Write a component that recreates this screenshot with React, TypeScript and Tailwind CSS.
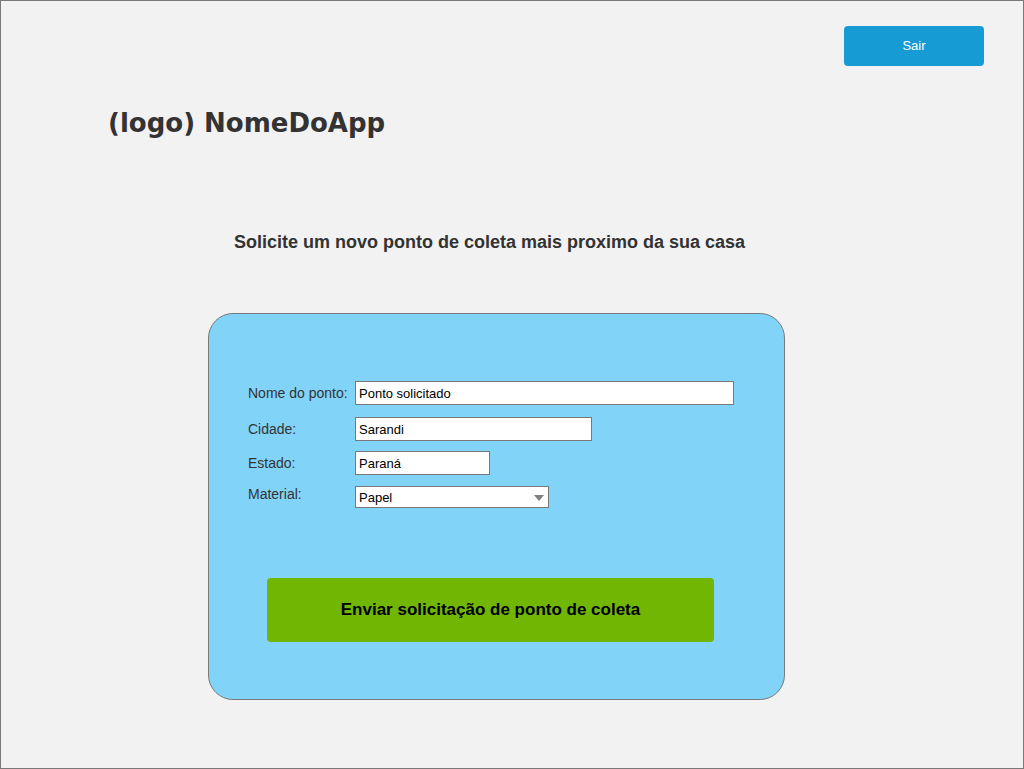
const fields = [
  { label: "Nome do ponto:", value: "Ponto solicitado", w: "w-[379px]", mt: "mt-0" },
  { label: "Cidade:", value: "Sarandi", w: "w-[237px]", mt: "mt-[12px]" },
  { label: "Estado:", value: "Paraná", w: "w-[135px]", mt: "mt-[10px]" },
];

export default function App() {
  return (
    <div className="w-[1024px] h-[769px] border border-[#797979] bg-[#f2f2f2] font-['Liberation_Sans',Arial,sans-serif] text-[#333333]">
      <div className="flex justify-end pt-[25px] pr-[39px]">
        <button className="w-[140px] h-[40px] rounded-[4px] bg-[#169bd5] text-white text-[13px]">Sair</button>
      </div>

      <h1 className="ml-[107px] mt-[40px] font-['DejaVu_Sans',Verdana,sans-serif] font-bold text-[26px] leading-[34px] text-[#333333]">
        (logo) NomeDoApp
      </h1>

      <p className="mt-[92px] ml-[233px] text-[18px] font-bold leading-[20px]">
        Solicite um novo ponto de coleta mais proximo da sua casa
      </p>

      <div className="ml-[207px] mt-[61px] w-[577px] h-[387px] rounded-[25px] border border-[#797979] bg-[#81d3f8] pt-[67px] pl-[39px]">
        {fields.map((f) => (
          <div key={f.label} className={`flex items-start ${f.mt}`}>
            <span className="w-[107px] text-[14px] leading-[16px] pt-[4px] text-[#333333]">{f.label}</span>
            <div className={`${f.w} h-[24px] border border-[#797979] bg-white px-[3px] pt-[2px] text-[13px] leading-[20px] text-black`}>
              {f.value}
            </div>
          </div>
        ))}
        <div className="flex items-start mt-[11px]">
          <span className="w-[107px] text-[14px] leading-[16px] pt-[0px] text-[#333333]">Material:</span>
          <div className="w-[194px] h-[22px] border border-[#797979] bg-white pl-[3px] pr-[4px] text-[13px] leading-[20px] text-black flex items-center justify-between">
            <span className="pt-[1px]">Papel</span>
            <svg width="10" height="6" viewBox="0 0 10 6" className="mt-[1px]">
              <path d="M0 0 H10 L5 6 Z" fill="#7f7f7f" />
            </svg>
          </div>
        </div>

        <button className="ml-[19px] mt-[70px] w-[447px] h-[64px] rounded-[4px] bg-[#70b603] text-black text-[17px] font-bold">
          Enviar solicitação de ponto de coleta
        </button>
      </div>
    </div>
  );
}
